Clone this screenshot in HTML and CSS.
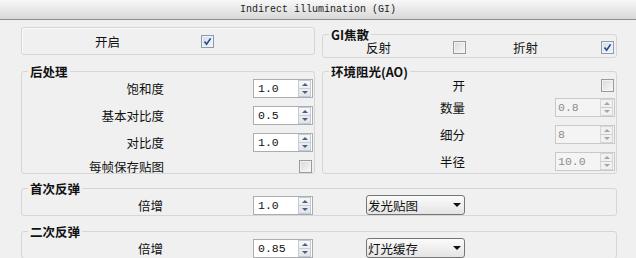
FILE: index.html
```html
<!DOCTYPE html>
<html lang="zh">
<head>
    <meta charset="UTF-8">
    <title>Indirect illumination (GI)</title>
    <link rel="stylesheet" href="styles.css">
</head>
<body>

    <div class="titlebar">Indirect illumination (GI)</div>

    <div class="panel">
        <!-- On / caustics -->
        <div class="row row-top">
            <div class="box">
                <span class="lbl enable-lbl">开启</span>
                <span class="check on enable-check"><svg viewBox="0 0 11 11" width="11" height="11"><path d="M2.5 5.5 L4.6 8.2 L8.6 2.4" fill="none" stroke="#24448c" stroke-width="1.6"/></svg></span>
            </div>

            <fieldset class="group caustics">
                <legend>GI焦散</legend>
                <div class="caustics-row">
                    <span class="lbl refl-lbl">反射</span>
                    <span class="check refl-check"></span>
                    <span class="lbl refr-lbl">折射</span>
                    <span class="check on refr-check"><svg viewBox="0 0 11 11" width="11" height="11"><path d="M2.5 5.5 L4.6 8.2 L8.6 2.4" fill="none" stroke="#24448c" stroke-width="1.6"/></svg></span>
                </div>
            </fieldset>
        </div>

        <!-- Post processing / ambient occlusion -->
        <div class="row row-mid">
            <fieldset class="group">
                <legend>后处理</legend>
                <div class="fields">
                    <div class="field">
                        <span class="lbl">饱和度</span>
                        <div class="spin"><span class="val">1.0</span><span class="spin-btns"><i class="up"></i><i class="down"></i></span></div>
                    </div>
                    <div class="field">
                        <span class="lbl">基本对比度</span>
                        <div class="spin"><span class="val">0.5</span><span class="spin-btns"><i class="up"></i><i class="down"></i></span></div>
                    </div>
                    <div class="field">
                        <span class="lbl">对比度</span>
                        <div class="spin"><span class="val">1.0</span><span class="spin-btns"><i class="up"></i><i class="down"></i></span></div>
                    </div>
                    <div class="field short">
                        <span class="lbl">每帧保存贴图</span>
                        <span class="check"></span>
                    </div>
                </div>
            </fieldset>

            <fieldset class="group">
                <legend>环境阻光(AO)</legend>
                <div class="fields">
                    <div class="field short first">
                        <span class="lbl">开</span>
                        <span class="check"></span>
                    </div>
                    <div class="field">
                        <span class="lbl">数量</span>
                        <div class="spin off"><span class="val">0.8</span><span class="spin-btns"><i class="up"></i><i class="down"></i></span></div>
                    </div>
                    <div class="field">
                        <span class="lbl">细分</span>
                        <div class="spin off"><span class="val">8</span><span class="spin-btns"><i class="up"></i><i class="down"></i></span></div>
                    </div>
                    <div class="field">
                        <span class="lbl">半径</span>
                        <div class="spin off"><span class="val">10.0</span><span class="spin-btns"><i class="up"></i><i class="down"></i></span></div>
                    </div>
                </div>
            </fieldset>
        </div>

        <!-- Bounces -->
        <fieldset class="group wide first-bounce">
            <legend>首次反弹</legend>
            <div class="bounce">
                <span class="lbl">倍增</span>
                <div class="spin"><span class="val">1.0</span><span class="spin-btns"><i class="up"></i><i class="down"></i></span></div>
                <div class="combo"><span>发光贴图</span><i class="caret"></i></div>
            </div>
        </fieldset>

        <fieldset class="group wide second-bounce">
            <legend>二次反弹</legend>
            <div class="bounce">
                <span class="lbl">倍增</span>
                <div class="spin"><span class="val">0.85</span><span class="spin-btns"><i class="up"></i><i class="down"></i></span></div>
                <div class="combo"><span>灯光缓存</span><i class="caret"></i></div>
            </div>
        </fieldset>
    </div>

</body>
</html>
```

FILE: styles.css
```css
/* Page */
body {
    margin: 0;
    width: 636px;
    height: 258px;
    overflow: hidden;
    background: #f0f0f0;
    font-family: "Noto Sans CJK SC", sans-serif;
    font-size: 12.5px;
    color: #111;
}

/* Rollout title */
.titlebar {
    height: 19px;
    border-bottom: 1px solid #8c8c8c;
    background: linear-gradient(#f8f8f8, #d8d8d8);
    font-family: "Liberation Mono", monospace;
    font-size: 10px;
    line-height: 19px;
    text-align: center;
    color: #222;
}

.panel {
    padding: 7px 19px 0 21px;
}

.row {
    display: grid;
    grid-template-columns: 294px 295px;
    column-gap: 7px;
}

.row-top {
    align-items: start;
}

.row-mid {
    margin-top: 7px;
}

/* Plain box and group boxes */
.box {
    height: 28px;
    box-sizing: border-box;
    border: 1px solid #d6d6d6;
    border-radius: 3px;
    box-shadow: inset 1px 1px 0 #fbfbfb;
    display: flex;
    align-items: center;
}

.group {
    margin: 0;
    padding: 0 1px 0 0;
    min-width: 0;
    border: 1px solid #d6d6d6;
    border-radius: 3px;
}

.group legend {
    margin-left: 6px;
    padding: 0 2px;
    font-weight: bold;
    line-height: 13px;
}

.lbl {
    line-height: 13px;
    white-space: nowrap;
}

.enable-lbl {
    width: 98px;
    text-align: right;
}

.enable-check {
    margin-left: 81px;
}

/* GI caustics */
.caustics {
    margin-top: 1px;
    padding-bottom: 3px;
}

.caustics-row {
    display: flex;
    align-items: center;
    height: 13px;
}

.refl-lbl {
    width: 68px;
    text-align: right;
}

.refl-check {
    margin-left: 62px;
}

.refr-lbl {
    width: 72px;
    text-align: right;
}

.refr-check {
    margin-left: 63px;
}

/* Field rows */
.fields {
    display: flex;
    flex-direction: column;
    gap: 8px;
    padding-top: 1px;
}

.field {
    display: flex;
    align-items: center;
    height: 19px;
}

.field.short {
    height: 13px;
}

.field.first {
    margin-bottom: -2px;
}

.field .lbl {
    width: 142px;
    text-align: right;
}

.field .spin,
.field .check {
    margin-left: auto;
}

.field .check {
    margin-right: 1px;
}

/* Checkbox */
.check {
    width: 13px;
    height: 13px;
    box-sizing: border-box;
    border: 1px solid #9a9a9a;
    background: linear-gradient(135deg, #d9d9d9, #f9f9f9);
    box-shadow: inset 0 0 0 1px #f2f2f2;
    display: flex;
    align-items: center;
    justify-content: center;
    flex: none;
}

.check.on {
    border-color: #8e9ab0;
    background: linear-gradient(135deg, #d3dcea, #f4f7fb);
}

/* Spinner */
.spin {
    width: 60px;
    height: 19px;
    box-sizing: border-box;
    border: 1px solid #abadb3;
    background: #fff;
    display: flex;
    align-items: center;
    flex: none;
}

.val {
    flex: 1;
    padding-left: 4px;
    font-family: "Liberation Mono", monospace;
    font-size: 11.5px;
    color: #111;
}

.spin-btns {
    width: 13px;
    height: 17px;
    box-sizing: border-box;
    margin-right: 1px;
    border: 1px solid #c3cad4;
    background: linear-gradient(#f6f7f9, #e1e5ea);
    display: flex;
    flex-direction: column;
}

.spin-btns i {
    flex: 1;
    display: flex;
    align-items: center;
    justify-content: center;
}

.spin-btns i.up {
    border-bottom: 1px solid #c8ced8;
}

.spin-btns i::before {
    content: "";
    border-left: 3px solid transparent;
    border-right: 3px solid transparent;
}

.spin-btns i.up::before {
    border-bottom: 3px solid #4d5f80;
}

.spin-btns i.down::before {
    border-top: 3px solid #4d5f80;
}

.spin.off {
    border-color: #c9c9c9;
    background: #f4f4f4;
}

.spin.off .val {
    padding-left: 2px;
    color: #8c8c8c;
}

.spin.off .spin-btns {
    border-color: #d6d6d6;
    background: #f1f1f1;
}

.spin.off .spin-btns i.up::before {
    border-bottom-color: #a5a5a5;
}

.spin.off .spin-btns i.down::before {
    border-top-color: #a5a5a5;
}

/* Bounces */
.first-bounce {
    margin-top: 8px;
}

.second-bounce {
    margin-top: 9px;
}

.bounce {
    display: flex;
    align-items: center;
    height: 20px;
}

.bounce .lbl {
    width: 141px;
    text-align: right;
}

.bounce .spin {
    margin-left: 90px;
}

/* Dropdown */
.combo {
    width: 99px;
    height: 20px;
    box-sizing: border-box;
    margin-left: 53px;
    padding-left: 1px;
    border: 1px solid #767676;
    border-radius: 3px;
    background: linear-gradient(#fbfbfb, #e4e4e4);
    display: flex;
    align-items: center;
    line-height: 13px;
}

.caret {
    margin-left: auto;
    margin-right: 3px;
    border-left: 4px solid transparent;
    border-right: 4px solid transparent;
    border-top: 4px solid #111;
}
```
